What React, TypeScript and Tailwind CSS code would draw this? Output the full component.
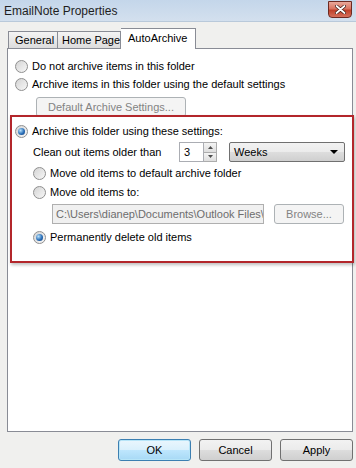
import React from 'react';

const Radio: React.FC<{ checked?: boolean }> = ({ checked }) => (
  <span className="w-[13px] h-[13px] rounded-full border border-[#8f8f8f] bg-[linear-gradient(135deg,#d4d4d4,#f7f7f7)] flex items-center justify-center shrink-0">
    {checked && (
      <span className="w-[7px] h-[7px] rounded-full bg-[radial-gradient(circle_at_35%_35%,#b9e2fb,#2a6fb8_55%,#0c3572)]" />
    )}
  </span>
);

const Option: React.FC<{ checked?: boolean; label: string; className?: string }> = ({ checked, label, className }) => (
  <div className={`flex items-center h-[18px] gap-[4px] whitespace-nowrap ${className ?? ''}`}>
    <Radio checked={checked} />
    <span>{label}</span>
  </div>
);

const Button: React.FC<{ label: string; focused?: boolean; disabled?: boolean; className?: string }> = ({ label, focused, disabled, className }) => (
  <div
    className={`flex items-center justify-center rounded-[3px] border whitespace-nowrap ${
      disabled
        ? 'border-[#adb2b5] bg-[#f4f4f4] text-[#838383]'
        : focused
        ? 'border-[#3c7fb1] bg-[linear-gradient(#eaf6fd_0%,#d9f0fc_50%,#bee6fd_51%,#a7d9f5_100%)] shadow-[inset_0_0_0_1px_#b7e5f8]'
        : 'border-[#707070] bg-[linear-gradient(#f2f2f2_0%,#ebebeb_50%,#dddddd_51%,#cfcfcf_100%)]'
    } ${className ?? ''}`}
  >
    {label}
  </div>
);

export default function App() {
  return (
    <div className="w-[356px] h-[468px] bg-[#f0f0ee] font-['Liberation_Sans',Arial,sans-serif] text-[11px] leading-none text-black flex flex-col overflow-hidden">
      {/* Title bar */}
      <div className="h-[22px] flex items-center justify-between pl-[4px] pr-[4px] bg-[linear-gradient(#c4d6ea,#d3e0ee)] border-b border-[#b9c9da]">
        <span className="text-[12px] text-[#1e1e1e] whitespace-nowrap">EmailNote Properties</span>
        <div className="w-[24px] h-[17px] -mt-[3px] rounded-b-[4px] border border-[#6d2a22] bg-[linear-gradient(#e9a99b_0%,#d9735f_45%,#c0402a_55%,#d5705c_100%)] flex items-center justify-center">
          <svg width="11" height="9" viewBox="0 0 11 9">
            <path d="M1.5 1 L9.5 8 M9.5 1 L1.5 8" stroke="#3b1a14" strokeWidth="3.2" strokeLinecap="round" />
            <path d="M1.5 1 L9.5 8 M9.5 1 L1.5 8" stroke="#fff" strokeWidth="1.8" strokeLinecap="round" />
          </svg>
        </div>
      </div>

      {/* Tabs */}
      <div className="h-[26px] flex items-end pl-[8px] whitespace-nowrap">
        <div className="h-[17px] w-[50px] border border-b-0 border-[#898c95] bg-[linear-gradient(#f4f4f4,#dcdcdc)] flex items-center pl-[6px]">General</div>
        <div className="h-[17px] w-[63px] border border-b-0 border-l-0 border-[#898c95] bg-[linear-gradient(#f4f4f4,#dcdcdc)] flex items-center pl-[4px]">Home Page</div>
        <div className="relative z-10 -mb-[1px] h-[21px] w-[75px] border border-b-0 border-l-0 border-[#898c95] bg-white flex items-center pl-[7px] pb-[2px]">AutoArchive</div>
      </div>

      {/* Panel */}
      <div className="ml-[7px] w-[346px] h-[384px] border border-[#898c95] bg-white flex flex-col">
        <div className="flex flex-col pl-[7px] pt-[8px]">
          <Option label="Do not archive items in this folder" />
          <Option label="Archive items in this folder using the default settings" />
          <Button label="Default Archive Settings..." disabled className="ml-[21px] mt-[4px] w-[150px] h-[20px]" />
        </div>

        <div className="relative ml-[2px] -mt-[2px] w-[344px] border-2 border-[#b3262b] shadow-[1px_2px_3px_rgba(0,0,0,0.25)] flex flex-col pl-[3px] pt-[5px] pb-[15px]">
          <Option checked label="Archive this folder using these settings:" />
          <div className="flex items-center h-[20px] mt-[2px] pl-[18px] whitespace-nowrap">
            <span className="w-[146px]">Clean out items older than</span>
            <div className="h-[20px] w-[25px] border border-[#abadb3] flex items-center pl-[4px]">3</div>
            <div className="h-[20px] w-[13px] flex flex-col">
              <div className="flex-1 border border-l-0 border-[#acacac] bg-[linear-gradient(#f4f4f4,#dedede)] flex items-center justify-center">
                <svg width="5" height="3" viewBox="0 0 5 3"><path d="M0 3 L2.5 0 L5 3 Z" fill="#4d4d4d" /></svg>
              </div>
              <div className="flex-1 border border-l-0 border-t-0 border-[#acacac] bg-[linear-gradient(#f4f4f4,#dedede)] flex items-center justify-center">
                <svg width="5" height="3" viewBox="0 0 5 3"><path d="M0 0 L2.5 3 L5 0 Z" fill="#4d4d4d" /></svg>
              </div>
            </div>
            <div className="ml-[12px] h-[20px] w-[116px] rounded-[2px] border border-[#707070] bg-[linear-gradient(#f2f2f2_0%,#ebebeb_50%,#dddddd_51%,#cfcfcf_100%)] flex items-center justify-between pl-[4px] pr-[6px]">
              <span>Weeks</span>
              <svg width="8" height="4" viewBox="0 0 8 4"><path d="M0 0 L8 0 L4 4 Z" fill="#000" /></svg>
            </div>
          </div>
          <Option label="Move old items to default archive folder" className="mt-[2px] pl-[18px]" />
          <Option label="Move old items to:" className="mt-[1px] pl-[18px]" />
          <div className="flex items-center mt-[3px] pl-[37px] gap-[10px]">
            <div className="h-[20px] w-[212px] shrink-0 border border-[#afafaf] bg-[#f0f0f0] text-[#6d6d6d] flex items-center pl-[3px] overflow-hidden whitespace-nowrap">
              C:\Users\dianep\Documents\Outlook Files\a
            </div>
            <Button label="Browse..." disabled className="w-[70px] h-[20px] shrink-0" />
          </div>
          <Option checked label="Permanently delete old items" className="mt-[4px] pl-[18px]" />
        </div>
      </div>

      {/* Buttons */}
      <div className="flex justify-end gap-[8px] pr-[3px] mt-[7px]">
        <Button label="OK" focused className="w-[73px] h-[22px]" />
        <Button label="Cancel" className="w-[73px] h-[22px]" />
        <Button label="Apply" className="w-[73px] h-[22px]" />
      </div>
    </div>
  );
}
